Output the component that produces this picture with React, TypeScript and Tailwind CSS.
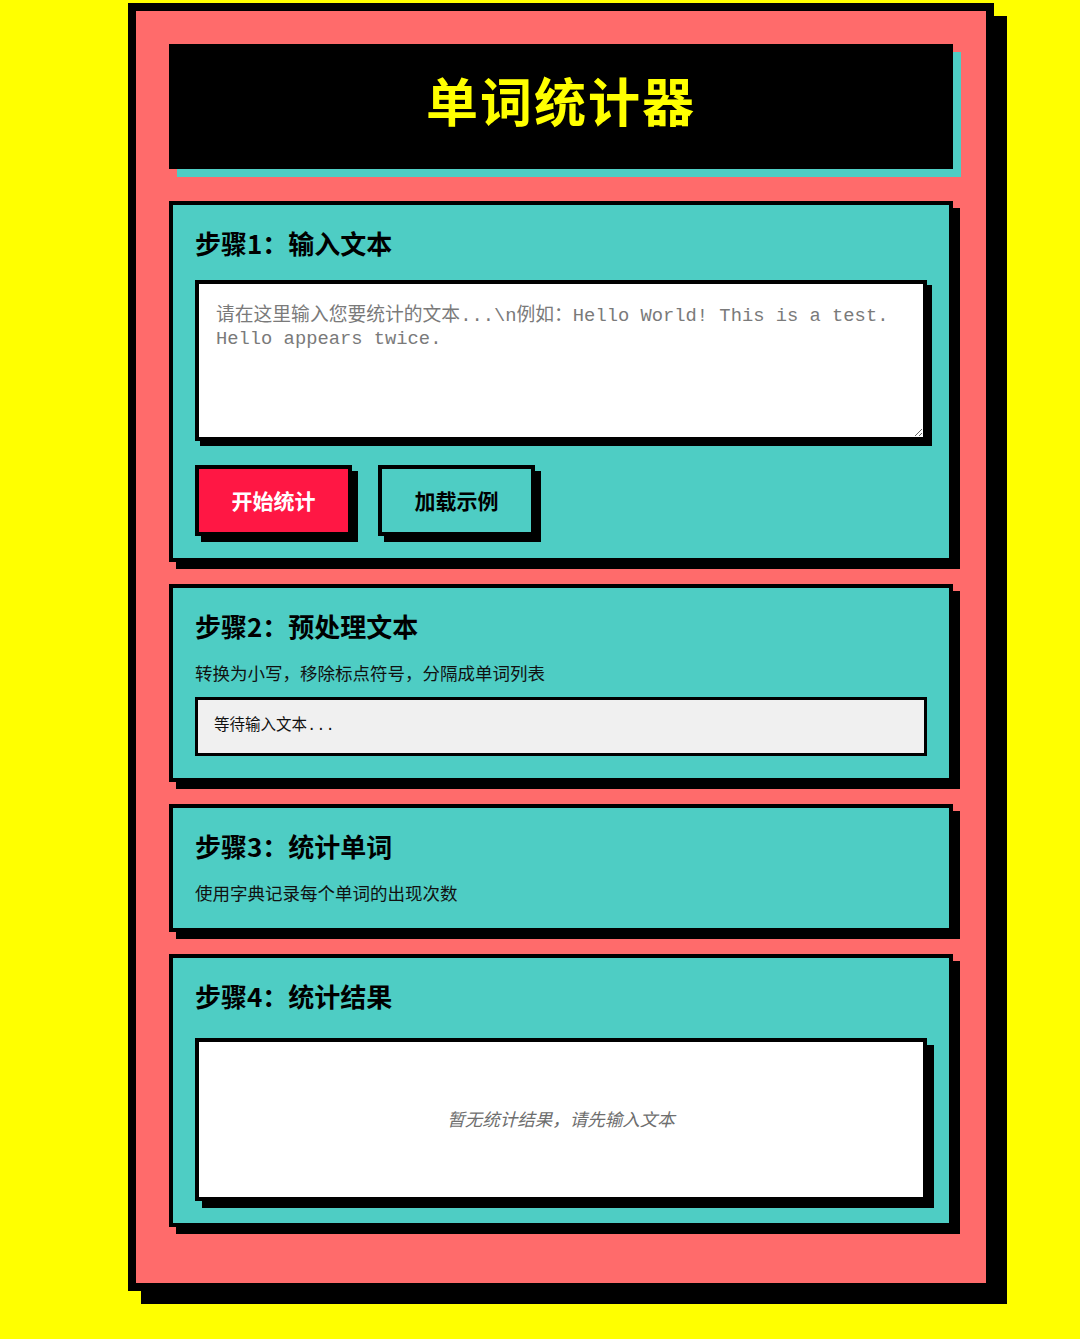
import React from 'react';

const cjk = "font-['Noto_Sans_CJK_SC',sans-serif]";
const mono = "font-['Liberation_Mono','Noto_Sans_CJK_SC',monospace]";

function StepCard({ title, titleGap, children }: { title: string; titleGap: string; children: React.ReactNode }) {
    return (
        <section className="mb-[22px] border-4 border-black bg-[#4ecdc4] p-[22px] shadow-[7px_7px_0_#000]">
            <h2 className={`text-[26px] leading-[32px] font-bold text-black ${titleGap}`}>{title}</h2>
            {children}
        </section>
    );
}

export default function App() {
    return (
        <div lang="zh-CN" className={`min-h-screen bg-[#ffff00] pt-[3px] pb-[36px] ${cjk}`}>
            <div className="ml-[128px] w-[866px] border-8 border-black bg-[#ff6b6b] px-[33px] pt-[33px] pb-[34px] shadow-[13px_13px_0_#000]">
                <header className="mb-[32px] flex h-[125px] items-center justify-center bg-black pb-[14px] shadow-[8px_8px_0_#4ecdc4]">
                    <h1 className="text-[52px] leading-none font-bold tracking-[2px] text-[#ffff00]">单词统计器</h1>
                </header>

                <StepCard title="步骤1：输入文本" titleGap="mb-[21px]">
                    <textarea
                        placeholder={'请在这里输入您要统计的文本...\\n例如：Hello World! This is a test.\nHello appears twice.'}
                        className={`block h-[161px] w-full border-4 border-black bg-white px-[17px] pt-[21px] pb-[13px] text-[18.8px] leading-[23px] text-black shadow-[5px_5px_0_#000] outline-none placeholder:text-[#7a7a7a] ${mono}`}
                    />
                    <div className="mt-[24px] flex gap-[26px]">
                        <button className="flex h-[71px] w-[157px] items-center justify-center border-4 border-black bg-[#ff1744] text-[21px] font-bold text-white shadow-[6px_6px_0_#000]">
                            开始统计
                        </button>
                        <button className="flex h-[71px] w-[157px] items-center justify-center border-4 border-black bg-[#4ecdc4] text-[21px] font-bold text-black shadow-[6px_6px_0_#000]">
                            加载示例
                        </button>
                    </div>
                </StepCard>

                <StepCard title="步骤2：预处理文本" titleGap="mb-[18px]">
                    <p className="mb-[11px] text-[17.5px] leading-[26px] text-[#111]">转换为小写，移除标点符号，分隔成单词列表</p>
                    <div className={`border-[3px] border-black bg-[#f0f0f0] px-[16px] py-[15px] text-[15.5px] leading-[23px] text-[#111] ${mono}`}>
                        等待输入文本...
                    </div>
                </StepCard>

                <StepCard title="步骤3：统计单词" titleGap="mb-[18px]">
                    <p className="text-[17.5px] leading-[26px] text-[#111]">使用字典记录每个单词的出现次数</p>
                </StepCard>

                <StepCard title="步骤4：统计结果" titleGap="mb-[26px]">
                    <div className="flex h-[163px] items-center justify-center border-4 border-black bg-white shadow-[7px_7px_0_#000]">
                        <p className="text-[17.5px] text-[#6e6e6e] italic">暂无统计结果，请先输入文本</p>
                    </div>
                </StepCard>
            </div>
        </div>
    );
}
